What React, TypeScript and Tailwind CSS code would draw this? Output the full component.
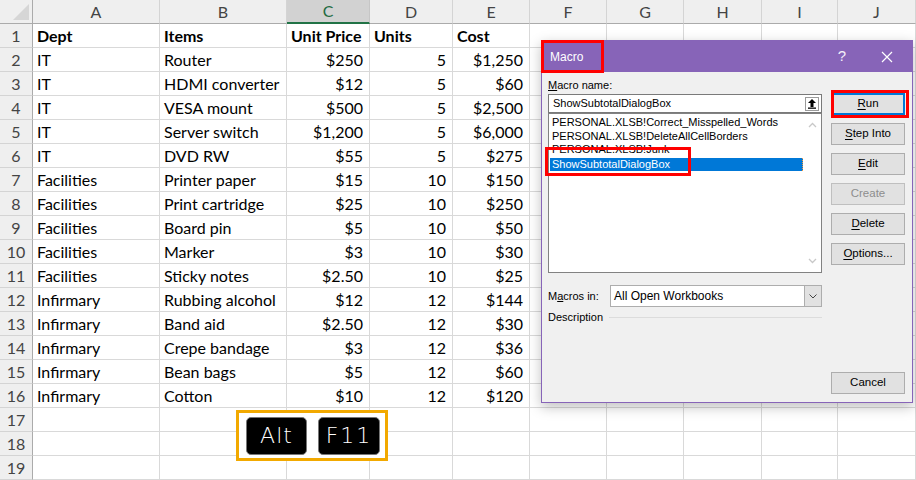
import React from "react";

type Row = [string, string, string, string, string];

const rows: Row[] = [
  ["Dept", "Items", "Unit Price", "Units", "Cost"],
  ["IT", "Router", "$250", "5", "$1,250"],
  ["IT", "HDMI converter", "$12", "5", "$60"],
  ["IT", "VESA mount", "$500", "5", "$2,500"],
  ["IT", "Server switch", "$1,200", "5", "$6,000"],
  ["IT", "DVD RW", "$55", "5", "$275"],
  ["Facilities", "Printer paper", "$15", "10", "$150"],
  ["Facilities", "Print cartridge", "$25", "10", "$250"],
  ["Facilities", "Board pin", "$5", "10", "$50"],
  ["Facilities", "Marker", "$3", "10", "$30"],
  ["Facilities", "Sticky notes", "$2.50", "10", "$25"],
  ["Infirmary", "Rubbing alcohol", "$12", "12", "$144"],
  ["Infirmary", "Band aid", "$2.50", "12", "$30"],
  ["Infirmary", "Crepe bandage", "$3", "12", "$36"],
  ["Infirmary", "Bean bags", "$5", "12", "$60"],
  ["Infirmary", "Cotton", "$10", "12", "$120"],
  ["", "", "", "", ""],
  ["", "", "", "", ""],
  ["", "", "", "", ""],
];

const letters = ["A", "B", "C", "D", "E", "F", "G", "H", "I", "J"];

const macros = [
  "PERSONAL.XLSB!Correct_Misspelled_Words",
  "PERSONAL.XLSB!DeleteAllCellBorders",
  "PERSONAL.XLSB!Junk",
];

function DlgButton({ label, u, rest, disabled = false, primary = false }: { label?: string; u: string; rest: string; disabled?: boolean; primary?: boolean }) {
  return (
    <div
      className={`h-[22px] w-[74px] flex items-center justify-center bg-[#e1e1e1] text-[11.5px] ${
        primary ? "border-2 border-[#0078d7]" : disabled ? "border border-[#bfbfbf]" : "border border-[#adadad]"
      } ${disabled ? "text-[#8d8d8d]" : "text-black"}`}
    >
      {label ? label : (
        <span>
          <span className="underline underline-offset-2">{u}</span>
          {rest}
        </span>
      )}
    </div>
  );
}

function MacroDialog() {
  return (
    <div className="absolute left-[541px] top-[40px] w-[372px] h-[363px] border border-[#8764b8] bg-[#f0f0f0] shadow-[0_4px_12px_rgba(0,0,0,0.25)] flex flex-col font-['Liberation_Sans',sans-serif]">
      {/* title bar */}
      <div className="h-[31px] bg-[#8764b8] flex items-center text-white shrink-0 relative">
        <span className="ml-[8px] text-[12px]">Macro</span>
        <span className="ml-auto text-[15px] mr-[35px] text-[#f4f0fa]">?</span>
        <svg width="12" height="12" viewBox="0 0 12 12" className="mr-[19px]">
          <path d="M1 1 L11 11 M11 1 L1 11" stroke="white" strokeWidth="1.2" />
        </svg>
        <div className="absolute -left-[1px] -top-[1px] w-[63px] h-[33px] border-[3px] border-[#ff0000]" />
      </div>

      {/* body */}
      <div className="flex flex-1 pl-[6px] pr-[7px]">
        <div className="w-[274px] flex flex-col">
          <div className="mt-[6px] h-[15px] text-[11px] leading-[15px] text-black">
            <span className="underline">M</span>acro name:
          </div>
          <div className="mt-[1px] h-[19px] border border-[#7a7a7a] bg-white flex items-center pl-[4px] text-[11px] text-black">
            <span>ShowSubtotalDialogBox</span>
            <div className="ml-auto mr-[2px] w-[14px] h-[14px] border border-[#9a9a9a] bg-white flex items-center justify-center">
              <svg width="10" height="11" viewBox="0 0 10 11">
                <path d="M5 1 L9 5 H6.5 V9 H3.5 V5 H1 Z" fill="black" />
                <rect x="1" y="9.5" width="8" height="1.3" fill="black" />
              </svg>
            </div>
          </div>
          <div className="h-[160px] border border-[#828282] bg-white flex relative">
            <div className="flex-1 pt-[2px] pl-[1px] text-[11px] leading-[13.5px] text-black">
              {macros.map((m) => (
                <div key={m} className="pl-[2px] h-[13.5px] whitespace-nowrap">{m}</div>
              ))}
              <div className="pl-[2px] h-[13px] mt-[1px] bg-[#0078d7] text-white whitespace-nowrap border-r border-dotted border-[#f59b42]">
                ShowSubtotalDialogBox
              </div>
            </div>
            <div className="w-[18px] flex flex-col items-center justify-between py-[8px]">
              <svg width="9" height="6" viewBox="0 0 9 6">
                <path d="M1 5 L4.5 1.5 L8 5" stroke="#c8c8c8" strokeWidth="1.3" fill="none" />
              </svg>
              <svg width="9" height="6" viewBox="0 0 9 6">
                <path d="M1 1 L4.5 4.5 L8 1" stroke="#c8c8c8" strokeWidth="1.3" fill="none" />
              </svg>
            </div>
            <div className="absolute -left-[4px] top-[33px] w-[146px] h-[29px] border-[3px] border-[#ff0000]" />
          </div>

          <div className="mt-[12px] flex items-center">
            <span className="w-[62px] text-[11px] text-black">
              M<span className="underline">a</span>cros in:
            </span>
            <div className="flex-1 h-[22px] border border-[#adadad] bg-white flex items-center">
              <span className="pl-[3px] text-[12px] text-black">All Open Workbooks</span>
              <div className="ml-auto w-[17px] h-full bg-[#e1e1e1] border-l border-[#adadad] flex items-center justify-center">
                <svg width="8" height="5" viewBox="0 0 8 5">
                  <path d="M0.5 0.5 L4 4 L7.5 0.5" stroke="#444" strokeWidth="1" fill="none" />
                </svg>
              </div>
            </div>
          </div>
          <div className="mt-[2px] flex items-center">
            <span className="text-[11px] text-black">Description</span>
            <div className="flex-1 ml-[6px] h-px bg-[#dcdcdc]" />
          </div>
        </div>

        <div className="ml-[9px] flex flex-col pt-[21px] pb-[8px] gap-[8px] relative">
          <DlgButton u="R" rest="un" primary />
          <DlgButton u="S" rest="tep Into" />
          <DlgButton u="E" rest="dit" />
          <DlgButton label="Create" u="" rest="" disabled />
          <DlgButton u="D" rest="elete" />
          <DlgButton u="O" rest="ptions..." />
          <div className="mt-auto">
            <DlgButton label="Cancel" u="" rest="" />
          </div>
          <div className="absolute left-0 top-[18px] w-[78px] h-[28px] border-[3px] border-[#ff0000]" />
        </div>
      </div>
    </div>
  );
}

export default function App() {
  return (
    <div className="relative w-[916px] h-[480px] overflow-hidden bg-white font-['Lato',sans-serif]">
      <div className="grid grid-cols-[33px_127px_127px_83px_83px_77px_77px_77px_78px_76px_78px] auto-rows-[24px] w-[916px]">
        {/* corner */}
        <div className="bg-[#efefef] border-r border-b border-[#ababab] relative">
          <svg width="16" height="16" viewBox="0 0 16 16" className="absolute right-[3px] bottom-[3px]">
            <path d="M16 0 L16 16 L0 16 Z" fill="#d6d6d6" />
          </svg>
        </div>
        {letters.map((l) => (
          <div
            key={l}
            className={`flex items-center justify-center text-[16px] border-r ${
              l === "C"
                ? "bg-[#d2d2d2] text-[#1e6b41] border-b-2 border-b-[#217346] border-r-[#c6c6c6]"
                : "bg-[#efefef] text-[#444] border-b border-b-[#ababab] border-r-[#d4d4d4]"
            }`}
          >
            {l}
          </div>
        ))}

        {rows.map((r, i) => (
          <React.Fragment key={i}>
            <div className="bg-[#efefef] border-r border-r-[#ababab] border-b border-b-[#d4d4d4] flex items-center justify-center text-[16px] text-[#444]">
              {i + 1}
            </div>
            {r.map((c, j) => (
              <div
                key={j}
                className={`border-r border-b border-[#d9d9d9] flex items-center text-[16px] text-black whitespace-nowrap ${
                  i === 0 ? "font-bold pl-[4px]" : j >= 2 ? "justify-end pr-[6px]" : "pl-[4px]"
                }`}
              >
                {c}
              </div>
            ))}
            {[0, 1, 2, 3, 4].map((k) => (
              <div key={`e${k}`} className="border-r border-b border-[#d9d9d9]" />
            ))}
          </React.Fragment>
        ))}
      </div>

      {/* shortcut keys */}
      <div className="absolute left-[236px] top-[410px] w-[152px] h-[51px] border-[3px] border-[#f2a900] bg-white flex items-center gap-[11px] pl-[7px]">
        <div className="w-[61px] h-[38px] rounded-[5px] bg-black border border-[#777] flex items-center justify-center text-white text-[22px] font-light font-['DejaVu_Sans',sans-serif] tracking-[1px]">
          Alt
        </div>
        <div className="w-[62px] h-[38px] rounded-[5px] bg-black border border-[#777] flex items-center justify-center text-white text-[22px] font-light font-['DejaVu_Sans',sans-serif] tracking-[2px]">
          F11
        </div>
      </div>

      <MacroDialog />
    </div>
  );
}
